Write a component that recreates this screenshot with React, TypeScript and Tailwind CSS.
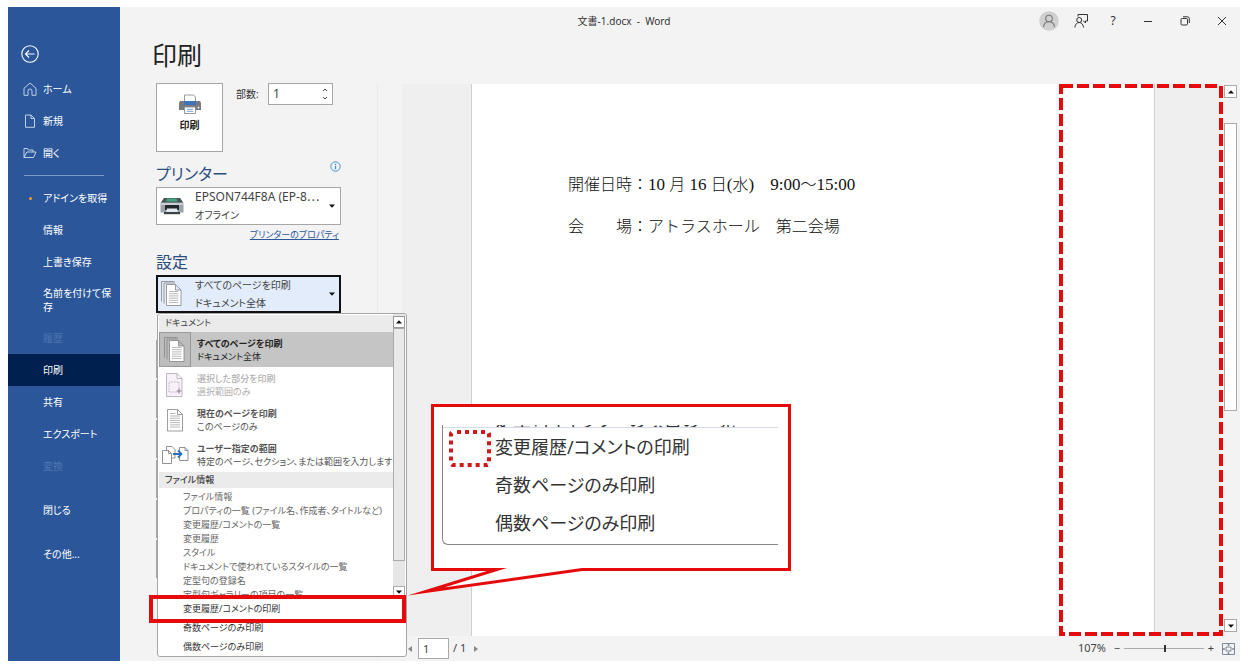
import type { ReactNode } from "react";

const uiFont = "font-['Noto_Sans','Noto_Sans_CJK_JP',sans-serif] [font-feature-settings:'palt']";

type NavItem = { label: string; icon?: ReactNode; dot?: boolean; disabled?: boolean; active?: boolean };

const topNav: NavItem[] = [
  {
    label: "ホーム",
    icon: <path d="M1 6.300 7 1l6 5.300v7H9V9a2 2 0 0 0-4 0v4.300H1z" />,
  },
  { label: "新規", icon: <path d="M2.500 1h5.500l3.500 3.500v8.800h-9zM8 1v3.500h3.500" /> },
  {
    label: "開く",
    icon: <path d="M1 11.500v-9h3.500l1 1.500H10v2M1 11.500 3.800 6H13l-2.500 5.500z" />,
  },
];

const mainNav: NavItem[] = [
  { label: "アドインを取得", dot: true },
  { label: "情報" },
  { label: "上書き保存" },
  { label: "名前を付けて保存" },
  { label: "履歴", disabled: true },
  { label: "印刷", active: true },
  { label: "共有" },
  { label: "エクスポート" },
  { label: "変換", disabled: true },
];

const infoItems = [
  "ファイル情報",
  "プロパティの一覧 (ファイル名、作成者、タイトルなど)",
  "変更履歴/コメントの一覧",
  "変更履歴",
  "スタイル",
  "ドキュメントで使われているスタイルの一覧",
  "定型句の登録名",
  "定型句ギャラリーの項目の一覧",
];

const printOptions = ["変更履歴/コメントの印刷", "奇数ページのみ印刷", "偶数ページのみ印刷"];

function NavButton({ item }: { item: NavItem }) {
  const tone = item.active ? "bg-[#00204f] text-white" : item.disabled ? "text-[#4e76b1]" : "text-white";
  return (
    <button
      type="button"
      disabled={item.disabled}
      className={`flex min-h-8 w-full items-center py-2 pl-[15px] pr-2 text-left text-[10px] leading-[14px] ${tone}`}
    >
      <span className="flex w-5 shrink-0">
        {item.icon && (
          <svg viewBox="0 0 14 14" className="h-3.5 w-3.5" fill="none" stroke="#cfdcf0" strokeWidth=".9">
            {item.icon}
          </svg>
        )}
        {item.dot && <span className="ml-1.5 h-[3px] w-[3px] rounded-full bg-[#f59b22]" />}
      </span>
      <span className="flex-1">{item.label}</span>
    </button>
  );
}

function Sidebar() {
  return (
    <nav className="w-28 shrink-0 bg-[#2b579a] pt-9">
      <button type="button" aria-label="戻る" className="mb-[9px] ml-[13px] block">
        <svg viewBox="0 0 20 20" className="h-5 w-5" fill="none" stroke="white" strokeWidth="1.1">
          <circle cx="9" cy="11" r="8.200" />
          <path d="M13.500 11h-9M8 7.500 4.500 11 8 14.500" />
        </svg>
      </button>
      <div className="pt-px">
        {topNav.map((item) => (
          <NavButton key={item.label} item={item} />
        ))}
      </div>
      <hr className="mx-4 my-1.5 border-[#7f9cc8]" />
      {mainNav.map((item) => (
        <NavButton key={item.label} item={item} />
      ))}
      <div className="mt-3 flex flex-col gap-3">
        <NavButton item={{ label: "閉じる" }} />
        <NavButton item={{ label: "その他..." }} />
      </div>
    </nav>
  );
}

function TitleBar() {
  return (
    <header className="-ml-28 grid h-7 grid-cols-[1fr_auto_1fr] items-center text-[#333]">
      <span />
      <p className="whitespace-pre text-[10px]">文書-1.docx  -  Word</p>
      <div className="flex h-full items-center justify-end">
        <button type="button" aria-label="アカウント" className="flex w-8 justify-center">
          <svg viewBox="0 0 20 20" className="h-5 w-5" fill="none" stroke="#777" strokeWidth="1.1">
            <circle cx="10" cy="10" r="9.800" fill="#d0d0d0" stroke="none" />
            <circle cx="10" cy="7.500" r="3.300" />
            <path d="M4.500 16c.3-3.400 2.500-5.200 5.500-5.200s5.200 1.800 5.500 5.200" />
          </svg>
        </button>
        <button type="button" aria-label="フィードバック" className="flex w-8 justify-center">
          <svg viewBox="0 0 14 14" className="h-3.5 w-3.5" fill="none" stroke="#333" strokeWidth="1">
            <path d="M4 2.500v-2h9.500V7H11.500v2L9.500 7H9" />
            <circle cx="5.200" cy="6" r="2.500" />
            <path d="M.8 13.500c.3-3 2-5 4.400-5s4 2 4.300 5" />
          </svg>
        </button>
        <button type="button" aria-label="ヘルプ" className="w-8 text-center text-xs">
          ?
        </button>
        <button type="button" aria-label="最小化" className="flex w-[37px] justify-center">
          <span className="h-px w-2 bg-[#333]" />
        </button>
        <button type="button" aria-label="元に戻す" className="flex w-[37px] justify-center">
          <svg viewBox="0 0 10 10" className="h-2.5 w-2.5" fill="none" stroke="#333" strokeWidth="1">
            <rect x="1" y="2.500" width="6.500" height="6.500" rx="1.200" />
            <path d="M3 .8h4.500a1.800 1.800 0 0 1 1.800 1.800V7" />
          </svg>
        </button>
        <button type="button" aria-label="閉じる" className="flex w-[37px] justify-center">
          <svg viewBox="0 0 10 10" className="h-2.5 w-2.5" fill="none" stroke="#333" strokeWidth="1">
            <path d="m1 1 8 8M9 1 1 9" />
          </svg>
        </button>
      </div>
    </header>
  );
}

function PrinterIcon() {
  return (
    <svg viewBox="0 0 24 20" className="h-5 w-6">
      <path d="M2 7h20l1 2v7H1V9z" fill="#767a80" />
      <path d="M6.500 1h9l2 2v6h-11z" fill="white" stroke="#8a8f96" strokeWidth=".9" />
      <path d="M6 7h12v4H6z" fill="#3f74b5" />
      <circle cx="20.500" cy="13.500" r=".9" fill="white" />
      <path d="M6.500 13h11v6.500h-11z" fill="white" stroke="#8a8f96" strokeWidth=".9" />
      <path d="M9 15.300h6M9 17.300h6" stroke="#6b9bd2" strokeWidth=".9" />
    </svg>
  );
}

function DeviceIcon() {
  return (
    <svg viewBox="0 0 24 18" className="h-[18px] w-6">
      <path d="M4 1h16l3.500 5v9.500H.5V6z" fill="#9aa3ac" />
      <path d="M4 1h16l3 4.500H1z" fill="#4c5459" />
      <path d="M7 1.500h9.500l1 3H6z" fill="#3fa77c" />
      <path d="M1 6h22v2H1z" fill="#c8d0d8" />
      <path d="M5 8h14v5H5z" fill="#22272b" />
      <path d="M7 11.500h10l1 4H6z" fill="#e4e9ee" />
      <path d="M4 15h16v2.200H4z" fill="#3b4248" />
    </svg>
  );
}

function PagesIcon({ stacked }: { stacked?: boolean }) {
  return (
    <svg viewBox="0 0 22 26" className="h-[26px] w-[22px]" fill="white" stroke="#858585" strokeWidth=".8">
      {stacked ? (
        <>
          <path d="M.5 20.500V.5h12l1.500 1M3 22.500V2h11" fill="none" />
          <path d="M5.500 3.500h9l5.500 5.500v15.500H5.500zM14.500 3.500V9H20" />
          <path d="M8 10.500h9.500M8 12.700h9.500M8 14.900h9.500M8 17.100h9.500M8 19.300h9.500M8 21.500h9.500" stroke="#a8a8a8" />
        </>
      ) : (
        <>
          <path d="M3.500 2.500h10l5 5V24h-15zM13.500 2.500v5h5" />
          <path
            d="M6 6.500h5.500M6 9h10M6 11.200h10M6 13.400h10M6 15.600h10M6 17.800h10M6 20h10"
            stroke="#a8a8a8"
          />
        </>
      )}
    </svg>
  );
}

function SelectionIcon() {
  return (
    <svg viewBox="0 0 22 26" className="h-[26px] w-[22px]" fill="none" stroke="#b9aebb" strokeWidth=".9">
      <path d="M2.500 1.500h10.500l5 5v18H2.500zM13 1.500v5h5" fill="#f8f1f9" />
      <path d="M5 10h10v10H5z" strokeDasharray="1.500 1" />
      <path d="M12.500 19h5M15 16.500v5" stroke="#8f8592" strokeWidth="1.100" />
    </svg>
  );
}

function RangeIcon() {
  return (
    <svg viewBox="0 0 28 20" className="h-5 w-7" fill="white" stroke="#858585" strokeWidth=".9">
      <path d="M5.500 13V1.500H11l3 3V13z" />
      <path d="M1.500 5.500h6l3 3v10h-9zM7.500 5.500v3h3" />
      <path d="M18.500 2.500h5.500l3 3v10h-8.500zM24 2.500v3h3" />
      <path d="M12 9h8M17 5.500 20.500 9 17 12.500" fill="none" stroke="#2f6fc1" strokeWidth="1.800" />
    </svg>
  );
}

function Caret({ up }: { up?: boolean }) {
  return (
    <svg viewBox="0 0 6 4" className="h-1 w-1.5 shrink-0" fill="#111">
      <path d={up ? "M0 3.500h6L3 .3z" : "M0 .5h6L3 3.700z"} />
    </svg>
  );
}

function OptionRow(props: { icon: ReactNode; title: string; note: string; selected?: boolean; disabled?: boolean }) {
  const { icon, title, note, selected, disabled } = props;
  return (
    <button
      type="button"
      role="option"
      aria-selected={!!selected}
      disabled={disabled}
      className={`flex h-[35px] w-full items-center text-left text-[9px] leading-[13px] ${
        selected ? "bg-[#c5c5c5] text-[#222]" : disabled ? "text-[#b0b0b0]" : "text-[#555]"
      }`}
    >
      <span
        className={`flex h-full w-8 shrink-0 items-center justify-center ${
          selected ? "border border-[#999] bg-[#bdbdbd]" : ""
        }`}
      >
        {icon}
      </span>
      <span className="whitespace-nowrap pl-1.5">
        <span className={`block ${disabled ? "font-medium" : "font-bold"}`}>{title}</span>
        <span className="block">{note}</span>
      </span>
    </button>
  );
}

function RangeMenu() {
  return (
    <div className="absolute left-px top-full z-10 w-[250px] rounded-[3px] border border-[#a6a6a6] bg-white">
      <div className="flex h-[285px]">
        <div role="listbox" aria-label="印刷範囲" className="min-w-0 flex-1 overflow-hidden pl-px pt-px">
          <p className="h-[17px] bg-[#ebebeb] pl-1.5 text-[9px] leading-4 text-[#444]">ドキュメント</p>
          <OptionRow selected icon={<PagesIcon stacked />} title="すべてのページを印刷" note="ドキュメント全体" />
          <OptionRow disabled icon={<SelectionIcon />} title="選択した部分を印刷" note="選択範囲のみ" />
          <OptionRow icon={<PagesIcon />} title="現在のページを印刷" note="このページのみ" />
          <OptionRow
            icon={<RangeIcon />}
            title="ユーザー指定の範囲"
            note="特定のページ、セクション、または範囲を入力します"
          />
          <p className="h-4 bg-[#ebebeb] pl-1.5 text-[9px] font-medium leading-4 text-[#444]">ファイル情報</p>
          <div className="pt-0.5">
            {infoItems.map((label) => (
              <button
                key={label}
                type="button"
                role="option"
                aria-selected={false}
                className="block h-3.5 w-full whitespace-nowrap pl-6 text-left text-[9px] leading-[14px] text-[#666]"
              >
                {label}
              </button>
            ))}
          </div>
        </div>
        <div className="mr-px flex w-3 shrink-0 flex-col bg-[#e6e6e6] pb-px pt-0.5">
          <button
            type="button"
            aria-label="上へ"
            className="flex h-3 items-center justify-center border border-[#999] bg-white"
          >
            <Caret up />
          </button>
          <div className="mb-[25px] flex-1 border border-[#aaa] bg-[#e9e9e9]" />
          <button
            type="button"
            aria-label="下へ"
            className="flex h-3 items-center justify-center border border-[#aaa] bg-white"
          >
            <Caret />
          </button>
        </div>
      </div>
      {printOptions.map((label) => (
        <button
          key={label}
          type="button"
          className="block h-[19px] w-full pl-[25px] text-left text-[9px] leading-[20px] text-[#333]"
        >
          {label}
        </button>
      ))}
      {/* highlighted option */}
      <div className="pointer-events-none absolute -left-[9px] right-0 top-[281px] h-7 border-4 border-[#e60b0b]" />
    </div>
  );
}

function PrintSettings() {
  return (
    <section className="mr-6 w-[258px] shrink-0 border-r border-[#ebebeb] pl-9">
      <div className="flex items-start">
        <button
          type="button"
          className="flex h-[69px] w-[67px] flex-col items-center gap-px border border-[#a6a6a6] bg-white pt-2.5 text-[10px] font-bold text-[#222]"
        >
          <PrinterIcon />
          <span className="leading-5">印刷</span>
        </button>
        <label htmlFor="copies" className="ml-[13px] w-8 text-[10px] leading-[22px] text-[#333]">
          部数:
        </label>
        <div className="flex h-[22px] w-[65px] border border-[#a6a6a6] bg-white">
          <input id="copies" defaultValue="1" className="w-full min-w-0 pl-1 text-xs text-[#444] outline-none" />
          <div className="flex w-3.5 shrink-0 flex-col items-center justify-around py-0.5">
            <button type="button" aria-label="増やす">
              <svg viewBox="0 0 6 4" className="h-1 w-1.5" fill="none" stroke="#444">
                <path d="m1 3 2-2 2 2" />
              </svg>
            </button>
            <button type="button" aria-label="減らす">
              <svg viewBox="0 0 6 4" className="h-1 w-1.5" fill="none" stroke="#444">
                <path d="m1 1 2 2 2-2" />
              </svg>
            </button>
          </div>
        </div>
      </div>

      <div className="w-[185px]">
        <div className="flex h-[35px] items-end justify-between">
          <h2 className="text-base leading-[26px] text-[#2b4d80]">プリンター</h2>
          <svg viewBox="0 0 11 11" className="mb-[15px] h-[11px] w-[11px]" fill="none" stroke="#3f94cf">
            <circle cx="5.500" cy="5.500" r="4.700" />
            <path d="M5.500 4.800v3.400M5.500 2.800v1.200" strokeWidth="1.300" />
          </svg>
        </div>
        <button
          type="button"
          aria-haspopup="listbox"
          className="flex h-[38px] w-full items-center border border-[#a6a6a6] bg-white pl-[3px] pr-[5px] text-left text-[10px] leading-[18px] text-[#444]"
        >
          <DeviceIcon />
          <span className="flex-1 whitespace-nowrap pl-[11px]">
            <span className="block text-xs leading-[18px]">EPSON744F8A (EP-8⋯</span>
            <span className="block">オフライン</span>
          </span>
          <Caret />
        </button>
        <p className="pr-0.5 text-right text-[9px] leading-5">
          <a href="#properties" className="text-[#2b579a] underline">
            プリンターのプロパティ
          </a>
        </p>
        <h2 className="pt-1 text-base leading-[26px] text-[#2b4d80]">設定</h2>
        <div className="relative">
          <button
            type="button"
            aria-haspopup="listbox"
            aria-expanded="true"
            className="flex h-[38px] w-full items-center border-2 border-[#111] bg-[#e2ecfb] pl-[3px] pr-1 text-left text-[10px] leading-[18px] text-[#444]"
          >
            <PagesIcon stacked />
            <span className="flex-1 pl-3">
              <span className="block">すべてのページを印刷</span>
              <span className="block">ドキュメント全体</span>
            </span>
            <Caret />
          </button>
          <RangeMenu />
        </div>
        {/* remaining setting boxes, behind the open menu */}
        <div className="mt-[27px] flex flex-col gap-0.5">
          {[0, 1, 2, 3, 4, 5].map((n) => (
            <div key={n} className="h-[38px] border border-[#a6a6a6] bg-white" />
          ))}
        </div>
      </div>
    </section>
  );
}

// digits are set slightly larger than the kanji around them
function Num({ children }: { children: string }) {
  return <span className="text-[17px]">{children}</span>;
}

function Preview() {
  return (
    <section className="flex min-w-0 flex-1 flex-col">
      <div className="flex flex-1 pt-px">
        <div className="relative flex flex-1 bg-[#efefef] pl-[69px] pr-[67px]">
          <article className="flex-1 whitespace-pre border-x border-[#cfcfcf] bg-white pl-24 pt-20 font-['Liberation_Serif','Noto_Sans_CJK_JP',serif] text-base font-light leading-[42px] text-[#111] [font-feature-settings:normal]">
            <p>
              開催日時：<Num>10 </Num>月<Num> 16 </Num>日<Num>(</Num>水<Num>)</Num>　<Num>9:00</Num>～<Num>15:00</Num>
            </p>
            <p>会　　場：アトラスホール　第二会場</p>
          </article>
          {/* margin area marker */}
          <svg className="absolute bottom-0.5 right-px top-0.5 h-[calc(100%-4px)] w-[160px] overflow-visible">
            <rect width="100%" height="100%" fill="none" stroke="#e60b0b" strokeWidth="4" strokeDasharray="12 4" />
          </svg>
        </div>
        <div className="flex w-[18px] flex-col px-0.5 pb-1 pt-px">
          <button
            type="button"
            aria-label="上へスクロール"
            className="flex h-[13px] w-[13px] items-center justify-center border border-[#aaa] bg-white"
          >
            <Caret up />
          </button>
          <div className="mt-[25px] h-[288px] w-[13px] border border-[#aaa] bg-white" />
          <button
            type="button"
            aria-label="下へスクロール"
            className="mt-auto flex h-[13px] w-[13px] items-center justify-center border border-[#aaa] bg-white"
          >
            <Caret />
          </button>
        </div>
      </div>
      <footer className="flex h-[25px] items-center pl-1.5 pr-[5px] text-[11px] text-[#444]">
        <button type="button" aria-label="前のページ" className="mr-1.5">
          <svg viewBox="0 0 4 6" className="h-1.5 w-1" fill="#888">
            <path d="M4 0v6L0 3z" />
          </svg>
        </button>
        <input aria-label="ページ" defaultValue="1" className="h-[21px] w-[31px] border border-[#aaa] bg-white pl-1" />
        <span className="px-1">/ 1</span>
        <button type="button" aria-label="次のページ" className="ml-1">
          <svg viewBox="0 0 4 6" className="h-1.5 w-1" fill="#888">
            <path d="M0 0v6l4-3z" />
          </svg>
        </button>
        <span className="ml-auto">107%</span>
        <button type="button" aria-label="縮小" className="w-[18px] pl-1 text-center">
          −
        </button>
        <input
          type="range"
          aria-label="ズーム"
          defaultValue="51"
          className="h-3 w-20 appearance-none bg-transparent [&::-webkit-slider-runnable-track]:h-px [&::-webkit-slider-runnable-track]:bg-[#aaa] [&::-webkit-slider-thumb]:-mt-[3px] [&::-webkit-slider-thumb]:h-[7px] [&::-webkit-slider-thumb]:w-0.5 [&::-webkit-slider-thumb]:appearance-none [&::-webkit-slider-thumb]:bg-[#333]"
        />
        <button type="button" aria-label="拡大" className="w-[18px] pr-1 text-center">
          +
        </button>
        <button type="button" aria-label="ページに合わせる">
          <svg viewBox="0 0 13 12" className="h-3 w-[13px]" fill="none" stroke="#6f7f90" strokeWidth=".9">
            <path d="M.5.5h12v11H.5zM4 4h5v4H4z" />
            <path d="M6.500.8v2M6.500 9.200v2M.8 6h2M10.200 6h2" strokeWidth="1.500" />
          </svg>
        </button>
      </footer>
    </section>
  );
}

// enlarged view of the options at the foot of the menu
function Callout() {
  return (
    <div className="absolute left-[431px] top-[404px] z-20 h-[167px] w-[360px]">
      <svg viewBox="0 0 360 167" className="absolute inset-0 h-full w-full overflow-visible">
        <path
          d="M1.500 1.500h357v164H151L-5 187.500 66 165.500H1.500z"
          fill="white"
          stroke="#e60b0b"
          strokeWidth="3"
          strokeMiterlimit="20"
        />
      </svg>
      <div className="relative ml-[11px] mr-[13px] mt-[21px] h-[120px] overflow-hidden rounded-bl-md border-b border-l border-[#888] pl-[52px] text-lg text-[#333]">
        <div className="-ml-[52px] flex h-[3px] items-end overflow-hidden border-b border-[#d5dbe8] pl-[52px]">
          <p className="leading-[14px]">定型句ギャラリーの項目の一覧</p>
        </div>
        {printOptions.map((label) => (
          <p key={label} className="leading-[38px]">
            {label}
          </p>
        ))}
      </div>
      <svg className="absolute left-5 top-7 h-[33px] w-[38px] overflow-visible">
        <rect
          width="100%"
          height="100%"
          rx="2"
          fill="none"
          stroke="#d01818"
          strokeWidth="4"
          strokeDasharray="4 4"
          strokeDashoffset="-4"
        />
      </svg>
    </div>
  );
}

export default function App() {
  return (
    <div className={`relative flex min-h-screen bg-white pb-2.5 pl-2 pr-[9px] pt-[7px] ${uiFont}`}>
      <Sidebar />
      <main className="flex min-w-0 flex-1 flex-col bg-[#f3f3f3]">
        <TitleBar />
        <h1 className="h-12 pl-8 text-[25px] leading-10 text-[#222]">印刷</h1>
        <div className="flex flex-1">
          <PrintSettings />
          <Preview />
        </div>
      </main>
      <Callout />
    </div>
  );
}
